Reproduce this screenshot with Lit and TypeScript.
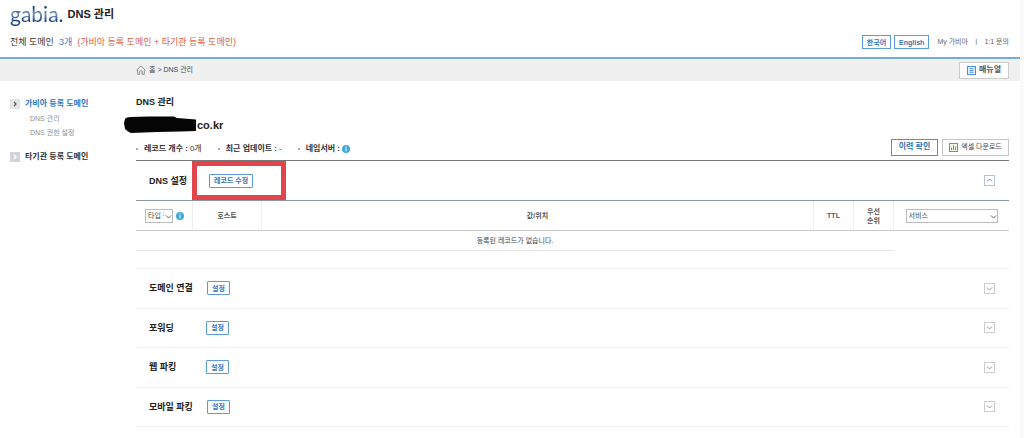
import { LitElement, html, svg, css } from "lit";
import { customElement, property, state } from "lit/decorators.js";

const chevron = (up: boolean) => svg`<path d=${up ? "M1 4.5 3.5 2 6 4.5" : "M1 2.5 3.5 5 6 2.5"} fill="none" stroke="currentColor" stroke-width="1"/>`;

@customElement("info-dot")
class InfoDot extends LitElement {
  static styles = css`
    :host { display: inline-flex; }
  `;
  render() {
    return html`<svg width="8" height="8" viewBox="0 0 8 8" aria-hidden="true">
      <circle cx="4" cy="4" r="4" fill="#3fa9d8" />
      <path d="M4 1.5v1M4 3.2v3.1" stroke="#fff" stroke-width="1.1" />
    </svg>`;
  }
}

@customElement("setting-row")
class SettingRow extends LitElement {
  @property() label = "";
  @property() action = "";
  @property({ type: Boolean }) open = false;
  @property({ type: Boolean }) marked = false;

  static styles = css`
    :host { display: grid; grid-template-columns: minmax(57px, auto) 1fr auto; align-items: center; padding: 0 14px 0 13px; position: relative; }
    :host([marked]) { grid-template-columns: 60px 1fr auto; }
    .label { margin: 0; padding-right: 14px; font-size: 9px; line-height: 14px; font-weight: 700; color: #222; white-space: nowrap; }
    .cell { display: flex; }
    button { font: inherit; cursor: pointer; }
    .action { box-sizing: border-box; height: 14px; padding: 0 4px; border: 1px solid #5a9bdc; background: #fff; color: #3a75b5; font-size: 7px; line-height: 11px; font-weight: 700; border-radius: 1px; min-width: 23px; }
    .toggle { display: flex; align-items: center; justify-content: center; width: 11px; height: 11px; padding: 0; border: 1px solid #ccc; background: #fff; color: #999; box-sizing: border-box; }
    .toggle.open { border-color: #b4c4d2; color: #6f8ca6; }
    .mark { position: absolute; left: 56px; top: 0; bottom: 0; width: 94px; box-sizing: border-box; border: 5px solid #e2444b; pointer-events: none; }
  `;
  render() {
    return html`
      <h3 class="label">${this.label}</h3>
      <div class="cell"><button class="action">${this.action}</button></div>
      <button class="toggle ${this.open ? "open" : ""}" aria-label="${this.label} 펼치기" aria-expanded=${this.open ? "true" : "false"}>
        <svg width="7" height="7" viewBox="0 0 7 7">${chevron(this.open)}</svg>
      </button>
      ${this.marked ? html`<span class="mark"></span>` : ""}
    `;
  }
}

@customElement("app-root")
class AppRoot extends LitElement {
  @state() private rows = ["도메인 연결", "포워딩", "웹 파킹", "모바일 파킹"];

  static styles = css`
    :host { display: block; min-height: 100vh; box-sizing: border-box; border-right: 4px solid #fafafa; background: #fff; color: #333; font-family: "Liberation Sans", "Noto Sans CJK KR", sans-serif; font-size: 7px; line-height: 14px; }
    a { color: inherit; text-decoration: none; }
    button, select { font: inherit; }
    button { cursor: pointer; }
    .header { border-bottom: 2px solid #74ace0; padding: 2px 11px 7px 10px; }
    .brand { display: flex; align-items: center; gap: 4px; height: 24px; }
    .logo { font-family: Lato, sans-serif; font-size: 21px; line-height: 26px; color: transparent; background: linear-gradient(180deg, #1f457f 25%, #7396c2 50%, #1f457f 75%); background-clip: text; -webkit-background-clip: text; }
    .title { margin: 0; font-size: 11px; line-height: 20px; color: #222; }
    .summary { display: flex; align-items: center; justify-content: space-between; padding-top: 8px; height: 16px; }
    .totals { display: flex; gap: 5px; margin: 0; font-size: 9px; line-height: 16px; }
    .count { color: #3d7fc8; }
    .detail { color: #d9603f; }
    .tools { display: flex; align-items: center; gap: 3px; color: #666; }
    .lang { box-sizing: border-box; height: 14px; padding: 0 4px; border: 1px solid #5a9bdc; background: #fff; color: #3a75b5; font-weight: 700; line-height: 11px; }
    .links { display: flex; gap: 5px; padding-left: 5px; }
    .crumbs { display: flex; justify-content: space-between; align-items: center; background: #f0f0f0; padding: 0 11px 0 136px; height: 22px; }
    .path { display: flex; align-items: center; gap: 3px; color: #444; }
    .manual { display: flex; align-items: center; justify-content: center; gap: 3px; width: 50px; height: 17px; box-sizing: border-box; padding: 0; border: 1px solid #ccc; background: #fff; color: #555; font-size: 8px; font-weight: 700; }
    .body { display: grid; grid-template-columns: 136px minmax(0, 1fr); padding-right: 11px; }
    .side { padding: 16px 0 0 10px; }
    .group { display: flex; align-items: center; gap: 5px; font-size: 8px; font-weight: 700; }
    .group.on { color: #2f76c4; }
    .arrow { display: flex; width: 10px; height: 10px; background: #d3d3da; color: #fff; }
    .on .arrow { background: #e4e4e4; color: #555; }
    .subs { list-style: none; margin: 0; padding: 1px 0 10px 20px; color: #8a929c; }
    .main { padding-top: 13px; }
    .heading { margin: 0; font-size: 9px; line-height: 16px; color: #222; }
    .domain { position: relative; margin: 0; padding: 6px 0 0 61px; font-size: 11px; line-height: 18px; font-weight: 700; color: #222; }
    .blot { position: absolute; left: -13px; top: 5px; }
    .info { display: flex; align-items: center; justify-content: space-between; height: 26px; }
    .facts { display: flex; gap: 16px; list-style: none; margin: 0; padding: 4px 0 0; font-size: 8px; }
    .facts li { display: flex; align-items: center; gap: 2px; }
    .facts li::before { content: ""; width: 2px; height: 2px; background: #aaa; margin-right: 4px; }
    .buttons { display: flex; align-items: center; gap: 4px; }
    .history { box-sizing: border-box; width: 47px; height: 17px; padding: 0; border: 1px solid #4a90d9; background: #fff; color: #2f6fb8; font-size: 8px; line-height: 14px; font-weight: 700; }
    .excel { display: flex; align-items: center; justify-content: center; gap: 3px; box-sizing: border-box; width: 67px; height: 17px; padding: 0; border: 1px solid #c6c6c6; background: #fff; color: #444; line-height: 14px; }
    .dns { height: 39px; border-top: 1px solid #777; border-bottom: 1px solid #8d98a3; }
    table { width: 100%; border-collapse: separate; border-spacing: 0; table-layout: fixed; }
    .c-type { width: 57px; } .c-host { width: 69px; } .c-ttl, .c-pri { width: 40px; } .c-svc { width: 115px; }
    th { height: 29px; padding: 0; border-bottom: 1px solid #c8c8c8; border-right: 1px solid #eee; color: #555; line-height: 9px; }
    th:last-child { border-right: 0; }
    td { height: 19px; padding: 0; text-align: center; border-bottom: 1px solid #e6e6e6; color: #444; }
    td.blank { border: 0; }
    .type { display: flex; align-items: center; gap: 3px; padding-left: 9px; }
    .pick { position: relative; display: flex; width: 28px; color: #666; font-weight: 400; }
    .pick.wide { width: 92px; margin: 0 auto; }
    select { appearance: none; box-sizing: border-box; width: 100%; height: 14px; padding: 0 8px 0 2px; margin: 0; border: 1px solid #bbb; border-radius: 0; background: #fff; color: #444; line-height: 12px; text-overflow: clip; }
    .pick svg { position: absolute; right: 1px; top: 4px; pointer-events: none; }
    .list { display: grid; grid-auto-rows: 1fr; min-height: 158px; margin-top: 17px; border-top: 1px solid #efefef; }
    .list setting-row { border-bottom: 1px solid #efefef; }
  `;

  render() {
    return html`
      <header class="header">
        <div class="brand"><a class="logo" href="#">gabia.</a><h1 class="title">DNS 관리</h1></div>
        <div class="summary">
          <p class="totals"><span>전체 도메인</span><span class="count">3개</span><span class="detail">(가비아 등록 도메인 + 타기관 등록 도메인)</span></p>
          <div class="tools">
            <button class="lang">한국어</button><button class="lang">English</button>
            <div class="links"><a href="#">My 가비아</a><span>ㅣ</span><a href="#">1:1 문의</a></div>
          </div>
        </div>
      </header>
      <nav class="crumbs">
        <span class="path">
          <svg width="10" height="10" viewBox="0 0 10 10"><path d="M.5 5.2 5 .9l4.500 4.300M1.700 4.500V9.300H3.800V6.300Q5 4.900 6.200 6.300V9.300H8.300V4.500" fill="none" stroke="#777" stroke-width=".8"/></svg>
          <span>홈 &gt; DNS 관리</span>
        </span>
        <button class="manual">
          <svg width="9" height="9" viewBox="0 0 9 9"><rect x=".5" y=".5" width="8" height="8" fill="#e4f0fb" stroke="#4a8fd6"/><path d="M2.500 2.700h4M2.500 4.500h4M2.500 6.300h4" stroke="#4a8fd6" stroke-width=".9"/></svg>매뉴얼
        </button>
      </nav>
      <div class="body">
        <aside class="side">
          <a class="group on" href="#"><span class="arrow"><svg width="10" height="10" viewBox="0 0 10 10"><path d="M4 3l2 2-2 2" fill="none" stroke="currentColor" stroke-width="1.200"/></svg></span>가비아 등록 도메인</a>
          <ul class="subs"><li><a href="#">DNS 관리</a></li><li><a href="#">DNS 권한 설정</a></li></ul>
          <a class="group" href="#"><span class="arrow"><svg width="10" height="10" viewBox="0 0 10 10"><path d="M4 3l2 2-2 2" fill="none" stroke="currentColor" stroke-width="1.200"/></svg></span>타기관 등록 도메인</a>
        </aside>
        <main class="main">
          <h2 class="heading">DNS 관리</h2>
          <p class="domain">
            <svg class="blot" width="74" height="19" viewBox="0 0 74 19" aria-hidden="true"><path d="M2 4Q3 2 8 2L25 1.500 51 1.500 54 3 73 4.500V16L58 16.500 34 17 8 18 5 16.500 2 14 1 8Z" fill="#050505"/></svg>co.kr
          </p>
          <div class="info">
            <ul class="facts">
              <li><b>레코드 개수 :</b> 0개</li><li><b>최근 업데이트 :</b> -</li><li><b>네임서버 :</b><info-dot></info-dot></li>
            </ul>
            <div class="buttons">
              <button class="history">이력 확인</button>
              <button class="excel"><svg width="9" height="9" viewBox="0 0 9 9"><rect x=".5" y=".5" width="8" height="8" fill="#eef7e6" stroke="#62ad38"/><path d="M2.500 7V4.500M4.500 7V2.300M6.500 7V3.600" stroke="#62ad38"/></svg>엑셀 다운로드</button>
            </div>
          </div>
          <setting-row class="dns" label="DNS 설정" action="레코드 수정" open marked></setting-row>
          <table>
            <colgroup><col class="c-type"><col class="c-host"><col><col class="c-ttl"><col class="c-pri"><col class="c-svc"></colgroup>
            <thead><tr>
              <th><div class="type"><span class="pick"><select aria-label="타입"><option>타입 전체</option></select><svg width="7" height="7" viewBox="0 0 7 7">${chevron(false)}</svg></span><info-dot></info-dot></div></th>
              <th>호스트</th><th>값/위치</th><th>TTL</th><th>우선<br>순위</th>
              <th><div class="pick wide"><select aria-label="서비스"><option>서비스</option></select><svg width="7" height="7" viewBox="0 0 7 7">${chevron(false)}</svg></div></th>
            </tr></thead>
            <tbody><tr><td colspan="5">등록된 레코드가 없습니다.</td><td class="blank"></td></tr></tbody>
          </table>
          <section class="list">
            ${this.rows.map((r) => html`<setting-row label=${r} action="설정"></setting-row>`)}
          </section>
        </main>
      </div>
    `;
  }
}
